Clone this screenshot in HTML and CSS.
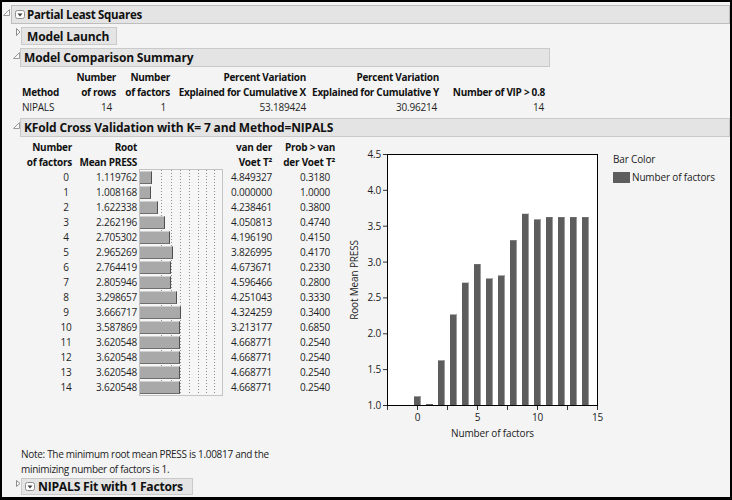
FILE: index.html
```html
<!DOCTYPE html>
<html>
<head>
<meta charset="utf-8">
<title>Partial Least Squares</title>
<link rel="stylesheet" href="styles.css">
</head>
<body>
<div class="window">
  <div class="node top">
    <div class="head">
      <span class="tri"><svg width="7" height="19"><path d="M0.5 10.5 L6.5 10.5 L6.5 4.5 Z" class="tri-open"/></svg></span>
      <div class="band pls">
        <span class="menu"><svg width="10" height="9"><rect x="0.5" y="0.5" width="9" height="8" rx="2" class="menu-box"/><path d="M2.5 3.5 H7.5 L5 6.5 Z" class="menu-arrow"/></svg></span>
        Partial Least Squares
      </div>
    </div>
    <div class="body">
      <div class="node">
        <div class="head">
          <span class="tri"><svg width="7" height="18"><path d="M3.5 1.5 L7 5 L3.5 8.5 Z" class="tri-closed"/></svg></span>
          <div class="box launch">Model Launch</div>
        </div>
      </div>

      <div class="node">
        <div class="head">
          <span class="tri"><svg width="7" height="19"><path d="M0.5 10.5 L6.5 10.5 L6.5 4.5 Z" class="tri-open"/></svg></span>
          <div class="band mcs-band">Model Comparison Summary</div>
        </div>
        <div class="content">
          <div class="mcs">
            <div class="h l">Method</div>
            <div class="h r">Number<br>of rows</div>
            <div class="h r">Number<br>of factors</div>
            <div class="h r">Percent Variation<br>Explained for Cumulative X</div>
            <div class="h r">Percent Variation<br>Explained for Cumulative Y</div>
            <div class="h r">Number of VIP &gt; 0.8</div>
            <div class="l">NIPALS</div>
            <div class="r p4">14</div>
            <div class="r p4">1</div>
            <div class="r">53.189424</div>
            <div class="r p2">30.96214</div>
            <div class="r p1">14</div>
          </div>
        </div>
      </div>

      <div class="node">
        <div class="head">
          <span class="tri"><svg width="7" height="19"><path d="M0.5 10.5 L6.5 10.5 L6.5 4.5 Z" class="tri-open"/></svg></span>
          <div class="band">KFold Cross Validation with K= 7 and Method=NIPALS</div>
        </div>
        <div class="content">
          <div class="kf-row">
            <div class="kf">
              <div class="h">Number<br>of factors</div>
              <div class="h">Root<br>Mean PRESS</div>
              <div class="h"></div>
              <div class="h">van der<br>Voet T²</div>
              <div class="h">Prob &gt; van<br>der Voet T²</div>

              <div class="barbox">
                <div class="bar-row"><div class="bar" style="width:12px"></div></div>
                <div class="bar-row"><div class="bar" style="width:11px"></div></div>
                <div class="bar-row"><div class="bar" style="width:18px"></div></div>
                <div class="bar-row"><div class="bar" style="width:25px"></div></div>
                <div class="bar-row"><div class="bar" style="width:30px"></div></div>
                <div class="bar-row"><div class="bar" style="width:33px"></div></div>
                <div class="bar-row"><div class="bar" style="width:31px"></div></div>
                <div class="bar-row"><div class="bar" style="width:31px"></div></div>
                <div class="bar-row"><div class="bar" style="width:37px"></div></div>
                <div class="bar-row"><div class="bar" style="width:41px"></div></div>
                <div class="bar-row"><div class="bar" style="width:40px"></div></div>
                <div class="bar-row"><div class="bar" style="width:40px"></div></div>
                <div class="bar-row"><div class="bar" style="width:40px"></div></div>
                <div class="bar-row"><div class="bar" style="width:40px"></div></div>
                <div class="bar-row"><div class="bar" style="width:40px"></div></div>
              </div>

              <div class="n"><span class="c">0</span></div><div class="v">1.119762</div><div class="v">4.849327</div><div class="v p5">0.3180</div>
              <div class="n"><span class="c">1</span></div><div class="v">1.008168</div><div class="v">0.000000</div><div class="v p5">1.0000</div>
              <div class="n"><span class="c">2</span></div><div class="v">1.622338</div><div class="v">4.238461</div><div class="v p5">0.3800</div>
              <div class="n"><span class="c">3</span></div><div class="v">2.262196</div><div class="v">4.050813</div><div class="v p5">0.4740</div>
              <div class="n"><span class="c">4</span></div><div class="v">2.705302</div><div class="v">4.196190</div><div class="v p5">0.4150</div>
              <div class="n"><span class="c">5</span></div><div class="v">2.965269</div><div class="v">3.826995</div><div class="v p5">0.4170</div>
              <div class="n"><span class="c">6</span></div><div class="v">2.764419</div><div class="v">4.673671</div><div class="v p5">0.2330</div>
              <div class="n"><span class="c">7</span></div><div class="v">2.805946</div><div class="v">4.596466</div><div class="v p5">0.2800</div>
              <div class="n"><span class="c">8</span></div><div class="v">3.298657</div><div class="v">4.251043</div><div class="v p5">0.3330</div>
              <div class="n"><span class="c">9</span></div><div class="v">3.666717</div><div class="v">4.324259</div><div class="v p5">0.3400</div>
              <div class="n"><span class="c">10</span></div><div class="v">3.587869</div><div class="v">3.213177</div><div class="v p5">0.6850</div>
              <div class="n"><span class="c">11</span></div><div class="v">3.620548</div><div class="v">4.668771</div><div class="v p5">0.2540</div>
              <div class="n"><span class="c">12</span></div><div class="v">3.620548</div><div class="v">4.668771</div><div class="v p5">0.2540</div>
              <div class="n"><span class="c">13</span></div><div class="v">3.620548</div><div class="v">4.668771</div><div class="v p5">0.2540</div>
              <div class="n"><span class="c">14</span></div><div class="v">3.620548</div><div class="v">4.668771</div><div class="v p5">0.2540</div>
            </div>

            <svg class="chart" width="384" height="305" viewBox="0 0 384 305">
              <rect x="42.5" y="14.5" width="210" height="251" class="plot"/>
              <g class="cbar">
                <rect x="69" y="256.4" width="7" height="8.6"/>
                <rect x="81" y="264" width="7" height="1"/>
                <rect x="93" y="220.4" width="7" height="44.6"/>
                <rect x="105" y="174.5" width="7" height="90.5"/>
                <rect x="117" y="142.7" width="7" height="122.3"/>
                <rect x="129" y="124.1" width="7" height="140.9"/>
                <rect x="141" y="138.5" width="7" height="126.5"/>
                <rect x="153" y="135.5" width="7" height="129.5"/>
                <rect x="165" y="100.2" width="7" height="164.8"/>
                <rect x="177" y="73.8" width="7" height="191.2"/>
                <rect x="189" y="79.4" width="7" height="185.6"/>
                <rect x="201" y="77.1" width="7" height="187.9"/>
                <rect x="213" y="77.1" width="7" height="187.9"/>
                <rect x="225" y="77.1" width="7" height="187.9"/>
                <rect x="237" y="77.1" width="7" height="187.9"/>
              </g>
              <g class="cedge">
                <rect x="75" y="256.4" width="1" height="8.6"/>
                <rect x="99" y="220.4" width="1" height="44.6"/>
                <rect x="111" y="174.5" width="1" height="90.5"/>
                <rect x="123" y="142.7" width="1" height="122.3"/>
                <rect x="135" y="124.1" width="1" height="140.9"/>
                <rect x="147" y="138.5" width="1" height="126.5"/>
                <rect x="159" y="135.5" width="1" height="129.5"/>
                <rect x="171" y="100.2" width="1" height="164.8"/>
                <rect x="183" y="73.8" width="1" height="191.2"/>
                <rect x="195" y="79.4" width="1" height="185.6"/>
                <rect x="207" y="77.1" width="1" height="187.9"/>
                <rect x="219" y="77.1" width="1" height="187.9"/>
                <rect x="231" y="77.1" width="1" height="187.9"/>
                <rect x="243" y="77.1" width="1" height="187.9"/>
              </g>
              <g class="tick">
                <path d="M38 265.5H42 M38 229.6H42 M38 193.8H42 M38 157.9H42 M38 122.1H42 M38 86.2H42 M38 50.3H42 M38 14.5H42"/>
                <path d="M42.5 266V270 M72.5 266V270 M102.5 266V270 M132.5 266V270 M162.5 266V270 M192.5 266V270 M222.5 266V270 M252.5 266V270"/>
              </g>
              <g class="lbl ylbl">
                <text x="36" y="269">1.0</text>
                <text x="36" y="233">1.5</text>
                <text x="36" y="197">2.0</text>
                <text x="36" y="161">2.5</text>
                <text x="36" y="125.5">3.0</text>
                <text x="36" y="89.5">3.5</text>
                <text x="36" y="54">4.0</text>
                <text x="36" y="18">4.5</text>
              </g>
              <g class="lbl xlbl">
                <text x="72.5" y="281">0</text>
                <text x="132.5" y="281">5</text>
                <text x="192.5" y="281">10</text>
                <text x="252.5" y="281">15</text>
              </g>
              <text class="lbl xlbl" x="147.5" y="297">Number of factors</text>
              <text class="lbl xlbl" transform="translate(13 140) rotate(-90)">Root Mean PRESS</text>
              <text class="lbl" x="268" y="23">Bar Color</text>
              <rect x="268" y="32" width="17" height="11" class="swatch"/>
              <text class="lbl" x="287" y="41">Number of factors</text>
            </svg>
          </div>
          <p class="note">Note: The minimum root mean PRESS is 1.00817 and the<br>minimizing number of factors is 1.</p>
        </div>
      </div>

      <div class="node">
        <div class="head last">
          <span class="tri"><svg width="7" height="17"><path d="M3.5 2.5 L7 5.5 L3.5 8.5 Z" class="tri-closed"/></svg></span>
          <div class="box nipals">
            <span class="menu"><svg width="10" height="9"><rect x="0.5" y="0.5" width="9" height="8" rx="2" class="menu-box"/><path d="M2.5 3.5 H7.5 L5 6.5 Z" class="menu-arrow"/></svg></span>
            NIPALS Fit with 1 Factors
          </div>
        </div>
      </div>
    </div>
  </div>
</div>
</body>
</html>
```

FILE: styles.css
```css
html, body {
  margin: 0;
  padding: 0;
  background: #000;
}

body {
  font-family: "Open Sans", "Noto Sans", sans-serif;
  font-size: 10px;
  color: #1f1f1f;
}

.window {
  width: 732px;
  height: 500px;
  box-sizing: border-box;
  border: 2px solid #000;
  border-bottom-width: 3px;
  background: #f4f4f4;
  padding-top: 3px;
  overflow: hidden;
}

.head {
  display: flex;
  align-items: flex-start;
}

.top > .head {
  padding-left: 1px;
}

.tri {
  flex: none;
  width: 7px;
  margin-right: 1px;
}

.body .tri {
  margin-right: 0;
}

.tri svg {
  display: block;
  overflow: visible;
}

.tri-open {
  fill: #fafafa;
  stroke: #9a9a9a;
  stroke-width: 1;
}

.tri-closed {
  fill: #fafafa;
  stroke: #8c8c8c;
  stroke-width: 1;
}

.band,
.box {
  box-sizing: border-box;
  background: #e4e4e4;
  border: 1px solid #cacaca;
  display: flex;
  align-items: center;
  font-weight: 700;
  font-size: 12px;
  letter-spacing: -0.15px;
  color: #111;
  white-space: nowrap;
}

.band {
  flex: 1 1 auto;
  height: 19px;
  padding-left: 3px;
}

.top > .head > .band {
  padding-left: 3px;
  border-color: #bdbdbd;
}

.band.pls {
  font-size: 11.5px;
  letter-spacing: -0.3px;
}

.menu {
  display: inline-flex;
  margin-right: 2px;
}

.menu svg {
  display: block;
}

.menu-box {
  fill: #fdfdfd;
  stroke: #8e8e8e;
}

.menu-arrow {
  fill: #3a3a3a;
}

.top > .body {
  padding-left: 11px;
}

.body > .node > .head {
  margin-top: 3px;
}

.body > .node > .head.last {
  margin-top: 0;
}

.mcs-band {
  flex: none;
  width: 530px;
}

.launch {
  margin-left: 1px;
  width: 96px;
  height: 18px;
  padding-left: 5px;
}

.nipals {
  margin-left: 1px;
  width: 172px;
  height: 17px;
  padding-left: 3px;
  font-size: 12.2px;
  letter-spacing: -0.25px;
}

.nipals .menu {
  margin-right: 3px;
}

.content {
  margin-left: 9px;
  margin-top: 3px;
}

/* Model comparison table */
.mcs {
  display: grid;
  grid-template-columns: 38px 56px 54px 136px 133px 106px;
  line-height: 15px;
  letter-spacing: -0.2px;
  white-space: nowrap;
}

.mcs .h {
  font-weight: 700;
  letter-spacing: -0.3px;
  color: #111;
  align-self: end;
}

.l { text-align: left; }
.r { text-align: right; }
.p1 { padding-right: 1px; }
.p2 { padding-right: 2px; }
.p4 { padding-right: 4px; }
.p5 { padding-right: 5px; }

/* KFold table */
.kf-row {
  display: flex;
  gap: 10px;
  height: 305px;
}

.kf {
  flex: none;
  align-self: flex-start;
  display: grid;
  grid-template-columns: 50px 65px 88px 47px 63px;
  grid-template-rows: 30px repeat(15, 15px);
  line-height: 15px;
  letter-spacing: -0.2px;
  white-space: nowrap;
}

.kf .h {
  font-weight: 700;
  letter-spacing: -0.25px;
  color: #111;
  text-align: right;
  align-self: end;
}

.kf .n,
.kf .v {
  text-align: right;
}

.kf .c {
  display: inline-block;
  width: 12px;
  text-align: center;
}

.barbox {
  grid-column: 3;
  grid-row: 2 / 17;
  margin: -1px 2px -1px 2px;
  border: 1px solid #c4c4c4;
  background-color: #f6f6f6;
  background-image:
    repeating-linear-gradient(#8e8e8e 0 1px, transparent 1px 3px),
    repeating-linear-gradient(#8e8e8e 0 1px, transparent 1px 3px),
    repeating-linear-gradient(#8e8e8e 0 1px, transparent 1px 3px),
    repeating-linear-gradient(#8e8e8e 0 1px, transparent 1px 3px),
    repeating-linear-gradient(#8e8e8e 0 1px, transparent 1px 3px),
    repeating-linear-gradient(#8e8e8e 0 1px, transparent 1px 3px),
    repeating-linear-gradient(#8e8e8e 0 1px, transparent 1px 3px);
  background-size: 1px 100%;
  background-repeat: no-repeat;
  background-position: 21px 0, 31px 0, 40px 0, 49px 0, 58px 0, 66px 0, 74px 0;
  display: flex;
  flex-direction: column;
}

.bar-row {
  flex: none;
  height: 15px;
}

.bar {
  box-sizing: border-box;
  height: 13px;
  margin-top: 1px;
  background: #a9a9a9;
  border-top: 1px solid #cfcfcf;
  border-right: 1px solid #4f4f4f;
  border-bottom: 1px solid #6e6e6e;
}

/* chart */
.chart {
  flex: none;
  display: block;
}

.plot {
  fill: #fff;
  stroke: #000;
  stroke-width: 1;
}

.cbar rect,
.swatch {
  fill: #5d5d5d;
}

.cedge rect {
  fill: #9c9c9c;
}

.tick path {
  stroke: #333;
  stroke-width: 1;
  fill: none;
}

.lbl {
  font-family: "Open Sans", "Noto Sans", sans-serif;
  font-size: 10px;
  letter-spacing: -0.15px;
  fill: #222;
}

.ylbl text {
  text-anchor: end;
}

.xlbl,
.xlbl text {
  text-anchor: middle;
}

.note {
  margin: 2px 0 1px -1px;
  line-height: 15px;
  font-size: 10px;
  letter-spacing: -0.3px;
  color: #222;
}
```
